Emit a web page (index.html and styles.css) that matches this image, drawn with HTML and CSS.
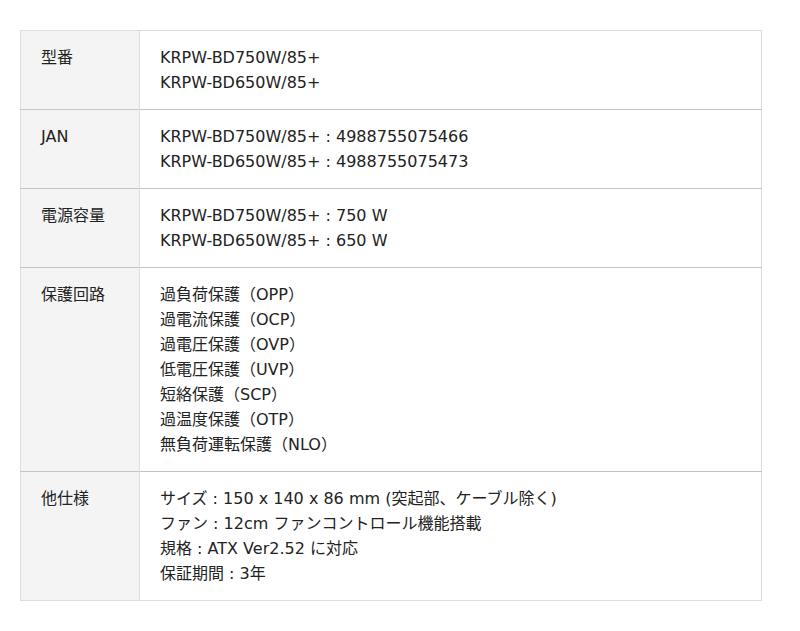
FILE: index.html
```html
<!DOCTYPE html>
<html lang="ja">
<head>
<meta charset="utf-8">
<link rel="stylesheet" href="styles.css">
</head>
<body>
<table class="spec">
  <tr>
    <th>型番</th>
    <td>KRPW-BD750W/85+<br>KRPW-BD650W/85+</td>
  </tr>
  <tr>
    <th>JAN</th>
    <td>KRPW-BD750W/85+ : 4988755075466<br>KRPW-BD650W/85+ : 4988755075473</td>
  </tr>
  <tr>
    <th>電源容量</th>
    <td>KRPW-BD750W/85+ : 750 W<br>KRPW-BD650W/85+ : 650 W</td>
  </tr>
  <tr>
    <th>保護回路</th>
    <td>過負荷保護（OPP）<br>過電流保護（OCP）<br>過電圧保護（OVP）<br>低電圧保護（UVP）<br>短絡保護（SCP）<br>過温度保護（OTP）<br>無負荷運転保護（NLO）</td>
  </tr>
  <tr>
    <th>他仕様</th>
    <td>サイズ : 150 x 140 x 86 mm (突起部、ケーブル除く)<br>ファン : 12cm ファンコントロール機能搭載<br>規格 : ATX Ver2.52 に対応<br>保証期間 : 3年</td>
  </tr>
</table>
</body>
</html>
```
FILE: styles.css
```css
html, body {
  margin: 0;
  padding: 0;
  background: #fff;
}
body {
  padding: 30px 38px 0 20px;
  font-family: "DejaVu Sans", "Noto Sans CJK JP", sans-serif;
  font-size: 16px;
  line-height: 25px;
  color: #222;
}
.spec {
  width: 742px;
  border-collapse: collapse;
  border: 1px solid #ddd;
}
.spec tr {
  border-top: 1px solid #c4c4c4;
}
.spec tr:first-child {
  border-top: 1px solid #ddd;
}
.spec th,
.spec td {
  padding: 14px 20px;
  text-align: left;
  vertical-align: top;
  font-weight: normal;
}
.spec th {
  width: 78px;
  background: #f4f4f4;
  border-right: 1px solid #ddd;
}
```
